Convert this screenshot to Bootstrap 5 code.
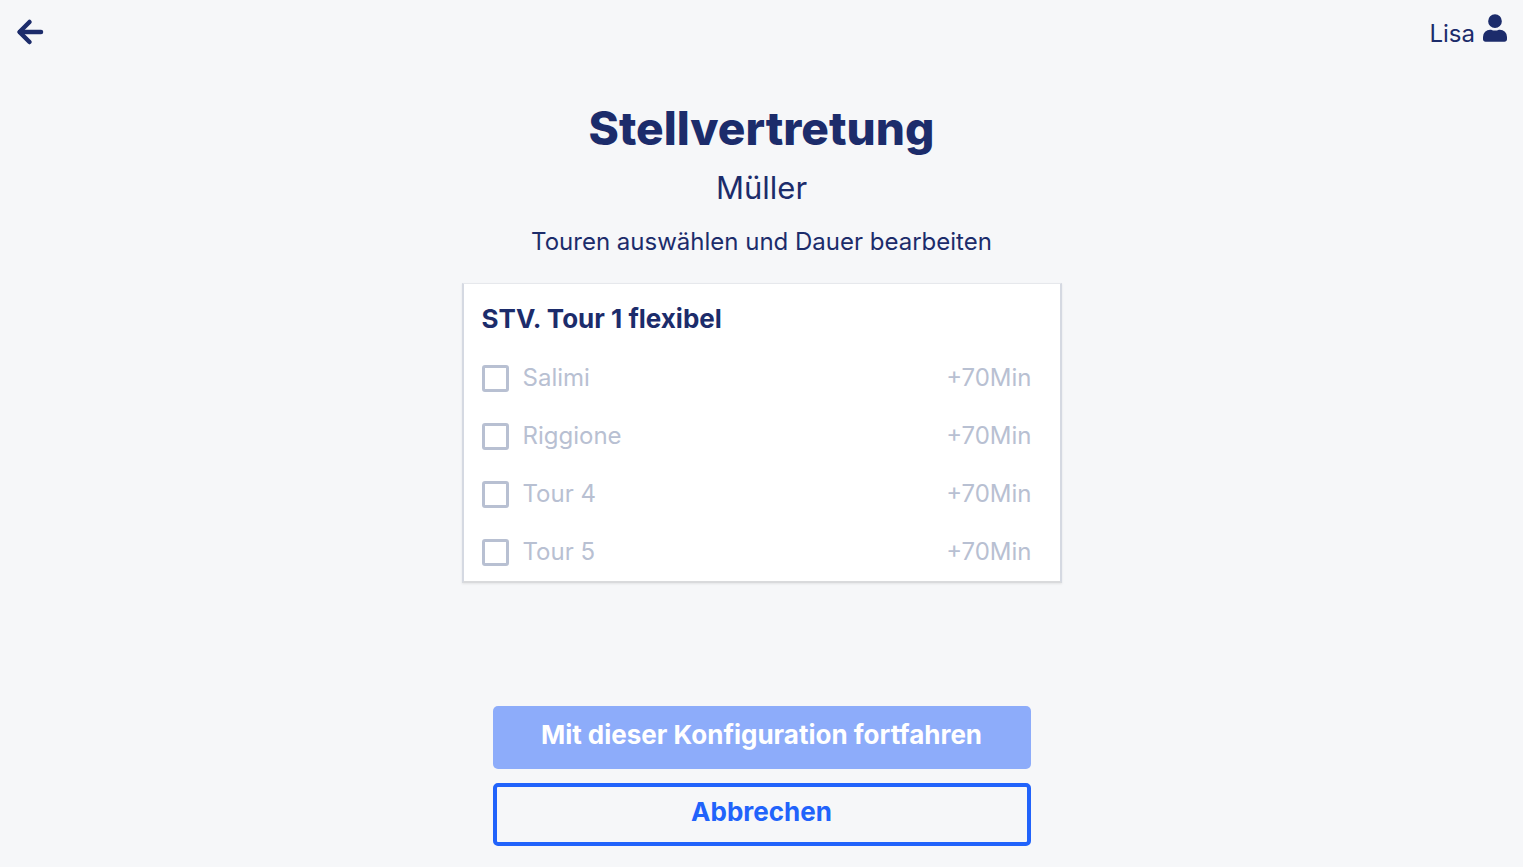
<!DOCTYPE html>
<html lang="de">
<head>
<meta charset="utf-8">
<meta name="viewport" content="width=device-width, initial-scale=1">
<title>Stellvertretung</title>
<link href="https://cdn.jsdelivr.net/npm/bootstrap@5.3.0/dist/css/bootstrap.min.css" rel="stylesheet">
<style>
body{font-family:Inter,sans-serif;background:#f6f7f9;color:#1c2c6b;font-size:24px;line-height:32px}
.topbar{height:64px}
.topbar a{color:inherit}
.content{padding-top:36px}
.page-title{font-size:46px;line-height:56px;font-weight:800;margin-bottom:12px}
.client{font-size:31px;line-height:40px;margin-bottom:18px}
.hint{margin-bottom:25px}
.tour-box{max-width:600px;padding:19px 28px 0 18px;background:#fff;border:2px solid #d5d9e2;border-top:1px solid #e6e8ec;border-bottom-color:#d9dadc;box-shadow:0 1px 2px rgba(0,0,0,.08)}
.tour-title{font-size:26px;line-height:32px;font-weight:700;margin-bottom:14px}
.tour-row{height:58px;gap:14px;color:#b8c0d2}
.tick{appearance:none;width:27px;height:27px;border:3px solid #b8c0d2;border-radius:3px;background:transparent}
.actions{max-width:538px;gap:14px;padding-bottom:21px}
.action{height:63px;padding:0 0 6px;font-size:26px;line-height:32px;font-weight:700;border-radius:5px}
.action-go,.action-go:disabled{background:#8dacfa;color:#fff;border:0;opacity:1}
.action-cancel,.action-cancel:hover{border:4px solid #2163fb;color:#2163fb}
</style>
</head>
<body class="d-flex flex-column min-vh-100">
<header class="topbar d-flex justify-content-between align-items-center px-3">
<a href="#" aria-label="Zurück"><svg class="d-block" width="28" height="28" viewBox="0 0 28 28" fill="none" stroke="currentColor" stroke-width="4.500" stroke-linecap="round" stroke-linejoin="round"><path d="M13.500 4 3.500 14l10 10"/><path d="M4 14H25"/></svg></a>
<a href="#" class="d-flex gap-2 text-decoration-none align-items-start"><span class="pt-1">Lisa</span><svg width="24" height="28" viewBox="0 0 448 512" fill="currentColor"><path d="M224 256a128 128 0 1 0 0-256 128 128 0 0 0 0 256zm90 32h-17a174 174 0 0 1-146 0h-17A134 134 0 0 0 0 422v42c0 27 21 48 48 48h352c27 0 48-21 48-48v-42a134 134 0 0 0-134-134z"/></svg></a>
</header>
<main class="d-flex flex-column flex-grow-1 align-items-center text-center">
<div class="content w-100">
<h1 class="page-title">Stellvertretung</h1>
<p class="client">Müller</p>
<p class="hint">Touren auswählen und Dauer bearbeiten</p>
<section class="tour-box mx-auto text-start">
<h2 class="tour-title">STV. Tour 1 flexibel</h2>
<ul class="list-unstyled mb-0">
<li class="tour-row d-flex align-items-center"><input class="tick" type="checkbox" id="t1" disabled><label for="t1" class="flex-grow-1">Salimi</label><span>+70Min</span></li>
<li class="tour-row d-flex align-items-center"><input class="tick" type="checkbox" id="t2" disabled><label for="t2" class="flex-grow-1">Riggione</label><span>+70Min</span></li>
<li class="tour-row d-flex align-items-center"><input class="tick" type="checkbox" id="t3" disabled><label for="t3" class="flex-grow-1">Tour 4</label><span>+70Min</span></li>
<li class="tour-row d-flex align-items-center"><input class="tick" type="checkbox" id="t4" disabled><label for="t4" class="flex-grow-1">Tour 5</label><span>+70Min</span></li>
</ul>
</section>
</div>
<div class="actions w-100 d-grid mt-auto">
<button type="button" class="btn action action-go" disabled>Mit dieser Konfiguration fortfahren</button>
<button type="button" class="btn action action-cancel">Abbrechen</button>
</div>
</main>
<script src="https://cdn.jsdelivr.net/npm/bootstrap@5.3.0/dist/js/bootstrap.bundle.min.js"></script>
</body>
</html>
